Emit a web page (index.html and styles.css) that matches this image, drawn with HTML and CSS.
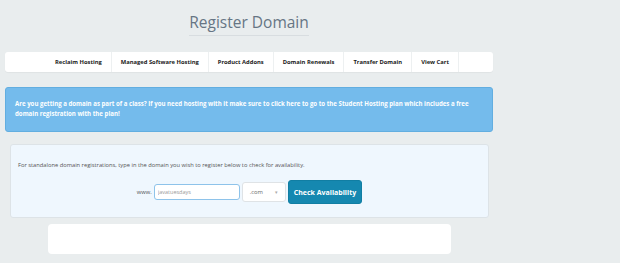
FILE: index.html
```html
<!DOCTYPE html>
<html lang="en">
<head>
    <meta charset="UTF-8">
    <title>Register Domain</title>
    <link rel="stylesheet" href="styles.css">
</head>
<body>
    <div class="page">
        <header class="page-header">
            <h1>Register Domain</h1>
        </header>

        <!-- store navigation -->
        <nav class="store-nav">
            <ul>
                <li><a href="#">Reclaim Hosting</a></li>
                <li><a href="#">Managed Software Hosting</a></li>
                <li><a href="#">Product Addons</a></li>
                <li><a href="#">Domain Renewals</a></li>
                <li><a href="#">Transfer Domain</a></li>
                <li><a href="#">View Cart</a></li>
            </ul>
        </nav>

        <div class="alert-info">
            Are you getting a domain as part of a class? If you need hosting with it make sure to click here to go to the Student Hosting plan which includes a free domain registration with the plan!
        </div>

        <!-- domain search -->
        <div class="domain-box">
            <p class="domain-hint">For standalone domain registrations, type in the domain you wish to register below to check for availability.</p>
            <form class="domain-form">
                <label for="sld">www.</label>
                <input type="text" id="sld" name="sld" value="javatuesdays">
                <div class="tld-select">.com <span class="caret">&#9662;</span></div>
                <button type="submit" class="check-btn">Check Availability</button>
            </form>
        </div>

        <div class="result-box"></div>
    </div>
</body>
</html>
```

FILE: styles.css
```css
body {
    margin: 0;
    background-color: #e9edee;
    font-family: 'Open Sans', sans-serif;
}

.page {
    width: 488px;
    padding: 0 0 0 5px;
}

.page-header {
    display: flex;
    justify-content: center;
    padding-top: 11px;
}

.page-header h1 {
    margin: 0;
    font-size: 15.5px;
    font-weight: 400;
    color: #667584;
    line-height: 22px;
    border-bottom: 1px solid #d8dde0;
    padding-bottom: 2px;
}

.store-nav {
    margin-top: 16px;
    background: white;
    border-radius: 3px;
    height: 20px;
    box-shadow: 0 1px 1px rgba(0,0,0,0.04);
}

.store-nav ul {
    list-style: none;
    margin: 0;
    padding: 0 0 0 41px;
    display: flex;
    height: 100%;
}

.store-nav li {
    border-right: 1px solid #edf0f1;
    display: flex;
    align-items: center;
    padding: 0 9px;
}

.store-nav a {
    color: #1a1a1a;
    text-decoration: none;
    font-size: 5.8px;
    font-weight: 700;
}

.alert-info {
    margin-top: 15px;
    background: #74bbec;
    border: 1px solid #62aee0;
    border-radius: 3px;
    color: white;
    font-size: 6.1px;
    font-weight: 700;
    line-height: 10px;
    padding: 11px 10px 12px 9px;
}

.domain-box {
    margin: 12px 4px 0 5px;
    background: #eff7fe;
    border: 1px solid #dde3e7;
    border-radius: 3px;
    padding: 16px 7px 13px;
}

.domain-hint {
    margin: 0;
    font-size: 5.75px;
    color: #555;
}

.domain-form {
    margin-top: 11px;
    display: flex;
    justify-content: center;
    align-items: center;
    gap: 2px;
}

.domain-form label {
    font-size: 5.8px;
    color: #555;
}

.domain-form input {
    width: 78px;
    height: 14px;
    border: 1px solid #8ec3ea;
    border-radius: 3px;
    padding: 0 3px;
    font-family: 'Open Sans', sans-serif;
    font-size: 5.5px;
    color: #999;
    background: white;
}

.tld-select {
    width: 28px;
    height: 18px;
    padding: 0 7px;
    display: flex;
    align-items: center;
    justify-content: space-between;
    background: white;
    border: 1px solid #dfe3e6;
    border-radius: 3px;
    font-size: 5.8px;
    color: #666;
}

.tld-select .caret {
    font-size: 5px;
    color: #aaa;
}

.check-btn {
    height: 24px;
    padding: 0 5px;
    background: #1588b0;
    border: 1px solid #117ea3;
    border-radius: 3px;
    color: white;
    font-family: 'Open Sans', sans-serif;
    font-size: 7px;
    font-weight: 700;
}

.result-box {
    margin: 6px 0 0 43px;
    width: 403px;
    height: 30px;
    background: white;
    border-radius: 4px;
}
```
